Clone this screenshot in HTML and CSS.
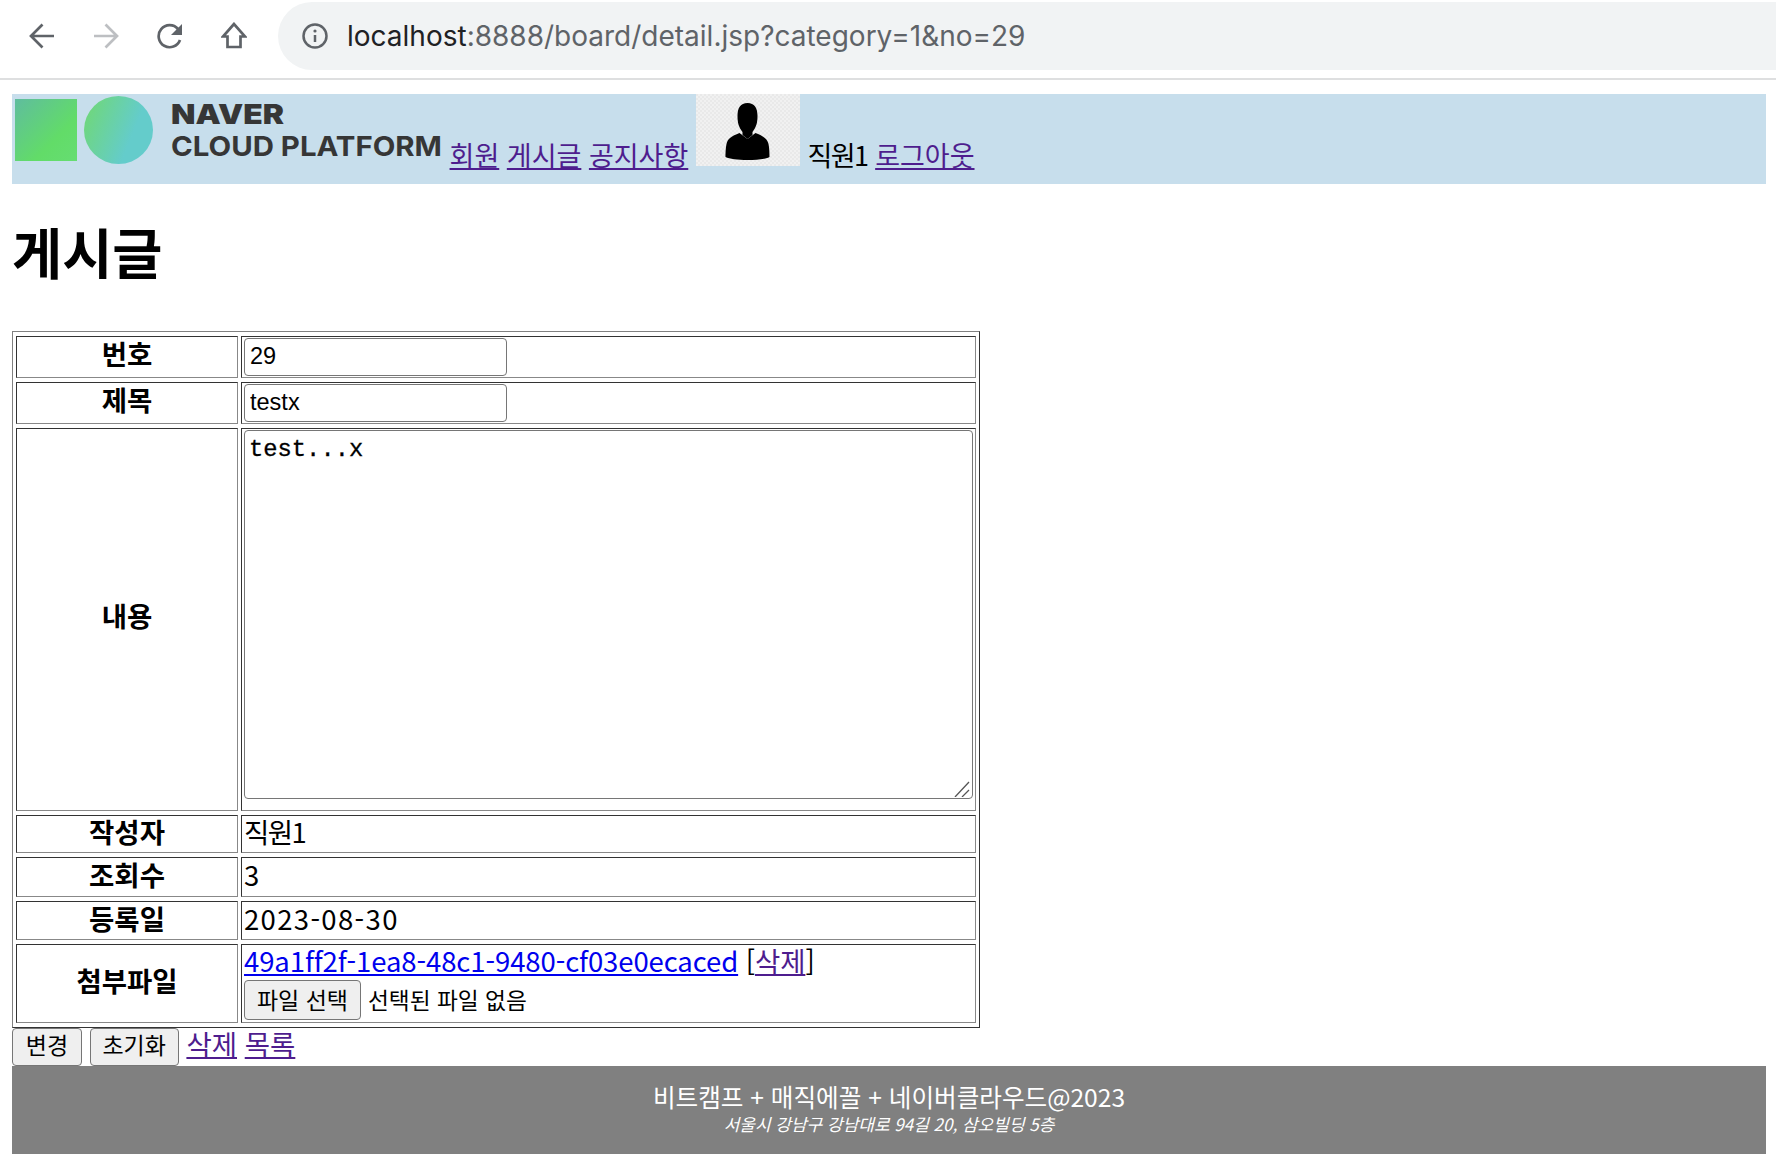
FILE: index.html
```html
<!DOCTYPE html>
<html lang="ko">
<head>
<meta charset="utf-8">
<title>게시글</title>
<link rel="stylesheet" href="styles.css">
</head>
<body>
<div class="toolbar">
  <div class="nav-icons">
    <svg class="icon" viewBox="0 0 26 28"><path d="M25 14H2.500M13.500 2.500L2 14l11.500 11.500"/></svg>
    <svg class="icon dim" viewBox="0 0 26 28"><path d="M1 14h22.500M12.500 2.500L24 14 12.500 25.500"/></svg>
    <svg class="icon" viewBox="0 0 26 28"><path d="M23 18a11 11 0 1 1-2-11"/><path class="solid" d="M25 2v11H14z"/></svg>
    <svg class="icon" viewBox="0 0 26 28"><path d="M13 2L2 14.500h4.500V25h13V14.500H24z"/></svg>
  </div>
  <div class="omnibox">
    <svg class="info" viewBox="0 0 26 26"><circle cx="13" cy="13" r="11.500"/><path d="M13 12v7"/><circle class="dot" cx="13" cy="8" r="1.600"/></svg>
    <span class="url"><span class="host">localhost</span>:8888/board/detail.jsp?category=1&amp;no=29</span>
  </div>
</div>
<div class="page">
  <header class="site-header">
    <svg class="logo" viewBox="0 0 430 72">
      <defs>
        <linearGradient id="sq" x1="0" y1="0" x2="1" y2="1"><stop offset="0" stop-color="#5fbd9e"/><stop offset=".65" stop-color="#62dc68"/><stop offset="1" stop-color="#66dd72"/></linearGradient>
        <linearGradient id="ci" x1="0" y1=".3" x2="1" y2=".7"><stop offset="0" stop-color="#6fd77c"/><stop offset=".7" stop-color="#64cccb"/></linearGradient>
      </defs>
      <rect x="3" y="5" width="62" height="62" fill="url(#sq)"/>
      <ellipse cx="106.500" cy="36" rx="34.500" ry="34" fill="url(#ci)"/>
      <text class="logo-naver" x="159" y="30" textLength="113" lengthAdjust="spacingAndGlyphs">NAVER</text>
      <text class="logo-cloud" x="159" y="62" textLength="271" lengthAdjust="spacingAndGlyphs">CLOUD PLATFORM</text>
    </svg>
    <a class="visited" href="#">회원</a>
    <a class="visited" href="#">게시글</a>
    <a class="visited" href="#">공지사항</a>
    <svg class="avatar" viewBox="-6.500 0 104 72">
      <path d="M45 9c7 0 10 5 10 13 0 6-1 11-5 16v3l-5 4-5-4v-3c-4-5-5-10-5-16 0-8 3-13 10-13z"/>
      <path d="M37 39l8 6 8-6c8 3 12 6 13 11 1 5 1 11 1 13-4 2-12 3-22 3s-18-1-22-3c0-2 0-8 1-13 1-5 5-8 13-11z"/>
    </svg>
    <span class="name">직원1</span>
    <a class="visited" href="#">로그아웃</a>
  </header>
  <h1 class="title">게시글</h1>
  <form class="board-form">
    <table class="board">
      <tr class="row-input"><th>번호</th><td><input class="field" value="29"></td></tr>
      <tr class="row-input"><th>제목</th><td><input class="field" value="testx"></td></tr>
      <tr class="row-content">
        <th>내용</th>
        <td>
          <div class="content-wrap">
            <textarea class="content">test...x</textarea>
            <svg class="grip" viewBox="0 0 16 16"><path d="M1 16L15 1M8 16l7-7"/></svg>
          </div>
        </td>
      </tr>
      <tr class="row-text row-short"><th>작성자</th><td class="name">직원1</td></tr>
      <tr class="row-text row-tall"><th>조회수</th><td>3</td></tr>
      <tr class="row-text"><th>등록일</th><td class="date">2023-08-30</td></tr>
      <tr class="row-file">
        <th>첨부파일</th>
        <td>
          <div class="file-link"><a class="unvisited" href="#">49a1ff2f-1ea8-48c1-9480-cf03e0ecaced</a> [<a class="visited" href="#">삭제</a>]</div>
          <div class="file-row"><button class="btn file-btn" type="button">파일 선택</button><span>선택된 파일 없음</span></div>
        </td>
      </tr>
    </table>
    <div class="actions">
      <button class="btn action-btn" type="button">변경</button>
      <button class="btn action-btn" type="button">초기화</button>
      <a class="visited" href="#">삭제</a>
      <a class="visited" href="#">목록</a>
    </div>
  </form>
  <footer class="site-footer">
    <div class="footer-main">비트캠프 + 매직에꼴 + 네이버클라우드@2023</div>
    <address class="footer-sub">서울시 강남구 강남대로 94길 20, 삼오빌딩 5층</address>
  </footer>
</div>
</body>
</html>
```

FILE: styles.css
```css
* { box-sizing: border-box; }
html, body { margin: 0; padding: 0; background: #fff; }
body {
  font-family: "Noto Sans CJK KR", "Noto Sans", sans-serif;
  font-size: 27.5px;
  color: #000;
  overflow: hidden;
  height: 1160px;
}
a { text-decoration: underline; }
.visited { color: #4e1d8e; }
.unvisited { color: #0000ee; }
.name { letter-spacing: -1.500px; }
.date { letter-spacing: 1.350px; }

.toolbar {
  height: 80px;
  padding: 2px 0 0 29px;
  border-bottom: 2px solid #dedfe0;
  display: flex;
  align-items: flex-start;
}
.nav-icons {
  width: 249px;
  height: 68px;
  display: flex;
  align-items: center;
  gap: 38px;
}
.icon { width: 26px; height: 28px; flex: none; }
.icon path { fill: none; stroke: #5f6368; stroke-width: 2.700; }
.icon .solid { fill: #5f6368; stroke: none; }
.icon.dim path { stroke: #bdbfc2; }
.omnibox {
  flex: 1;
  height: 68px;
  background: #f1f3f4;
  border-radius: 34px 0 0 34px;
  display: flex;
  align-items: center;
  padding-left: 24px;
  gap: 19px;
}
.info { width: 26px; height: 26px; flex: none; }
.info circle, .info path { fill: none; stroke: #5f6368; stroke-width: 2.500; }
.info .dot { fill: #5f6368; stroke: none; }
.url {
  font-family: Inter, sans-serif;
  font-size: 28px;
  color: #5f6368;
  white-space: nowrap;
}
.host { color: #202124; }

.page { padding: 14px 10px 0 12px; }
.site-header {
  background: #c7deec;
  height: 90px;
  font-size: 27px;
  white-space: nowrap;
}
.logo { width: 430px; height: 72px; vertical-align: baseline; }
.logo-naver, .logo-cloud {
  font-family: Inter, sans-serif;
  font-size: 27.500px;
  fill: #363636;
}
.logo-naver { font-weight: 900; }
.logo-cloud { font-weight: 700; }
.avatar {
  width: 104px;
  height: 72px;
  vertical-align: baseline;
  background: repeating-conic-gradient(#f1f1f1 0 25%, #e9e9e9 0 50%) 0 0 / 4px 4px;
}
.title {
  font-size: 54.500px;
  font-weight: 700;
  line-height: 66px;
  margin: 34px 0 47px;
}
.board {
  width: 968px;
  border-collapse: separate;
  border-spacing: 3px 4px;
  border: 1px solid;
  border-color: #808080 #333 #333 #808080;
  line-height: 30px;
  table-layout: fixed;
}
.board th, .board td {
  border: 1px solid;
  border-color: #333 #888 #888 #333;
  padding: 0 2px 6px;
}
.board th { width: 222px; text-align: center; font-weight: 700; }
.row-input th, .row-input td { height: 42px; }
.board .row-input th { padding-bottom: 9px; }
.board .row-input td { padding: 1px 2px; }
.row-content th, .row-content td { height: 383px; }
.board .row-content th { padding-bottom: 10px; }
.board .row-content td { padding: 1px 2px; vertical-align: top; }
.row-text th, .row-text td { height: 39px; }
.row-text.row-short th, .row-text.row-short td { height: 38px; }
.row-text.row-tall th, .row-text.row-tall td { height: 40px; }
.row-file th, .row-file td { height: 79px; }
.board .row-file th { padding-bottom: 7px; }
.board .row-file td { padding: 0 2px; vertical-align: top; }
.field {
  display: block;
  width: 263px;
  height: 38px;
  font: 23.500px "Liberation Sans", Arial, sans-serif;
  color: #000;
  padding: 0 5px 2px;
  border: 1px solid #767676;
  border-radius: 4px;
  background: #fff;
}
.content-wrap { position: relative; height: 369px; }
.content {
  display: block;
  width: 100%;
  height: 369px;
  font: 23.800px "Liberation Mono", "Courier New", monospace;
  -webkit-text-stroke: 0.300px #000;
  color: #000;
  line-height: 27px;
  padding: 5px 4px 3px;
  border: 1px solid #767676;
  border-radius: 4px;
  background: #fff;
  resize: none;
}
.grip { position: absolute; right: 3px; bottom: 2px; width: 16px; height: 16px; }
.grip path { fill: none; stroke: #555; stroke-width: 1.300; }
.btn {
  font-family: "Noto Sans CJK KR", "Noto Sans", sans-serif;
  font-size: 23px;
  line-height: 30px;
  color: #000;
  background: #efefef;
  border: 1px solid #767676;
  border-radius: 4px;
  padding: 0 0 3px;
  height: 38px;
}
.file-link { line-height: 30px; letter-spacing: -0.090px; }
.file-row {
  display: flex;
  align-items: center;
  gap: 7px;
  font-size: 22.700px;
  margin-top: 5px;
}
.file-btn { width: 117px; height: 40px; }
.actions { height: 38px; line-height: 30px; white-space: nowrap; }
.action-btn { vertical-align: top; padding-bottom: 6px; }
.action-btn:nth-child(1) { width: 70px; }
.action-btn:nth-child(2) { width: 89px; }
.site-footer {
  background: #808080;
  color: #fff;
  text-align: center;
  height: 88px;
  padding-top: 13px;
}
.footer-main { font-size: 24.600px; line-height: 35px; }
.footer-sub { font-size: 17px; font-style: italic; line-height: 20px; }
```
